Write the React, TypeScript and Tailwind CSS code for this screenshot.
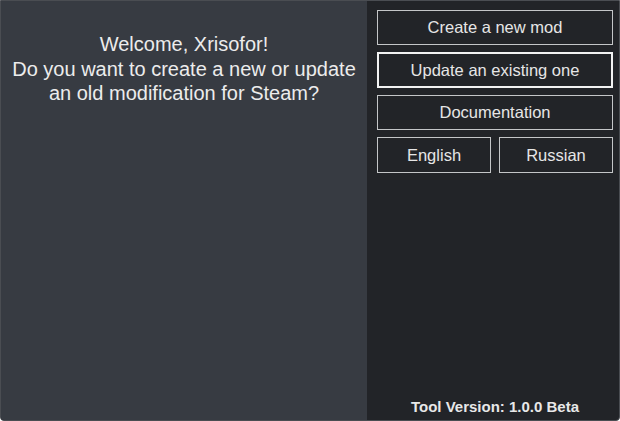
import React from 'react';

const btn =
  'flex h-[35px] items-center justify-center border border-[#c4c6c8] bg-[#222428] text-[16.5px] text-[#e6e6e6]';

export default function App() {
  return (
    <div
      className="flex h-[421px] w-[620px] overflow-hidden rounded-b-[4px] border border-[#4a4d52] bg-[#222428]"
      style={{ fontFamily: '"Liberation Sans", Arial, sans-serif' }}
    >
      {/* Welcome pane */}
      <div className="w-[366px] shrink-0 bg-[#373b42] pt-[31px] text-center text-[20px] leading-[24.5px] text-[#ececec]">
        <p>Welcome, Xrisofor!</p>
        <p>Do you want to create a new or update</p>
        <p>an old modification for Steam?</p>
      </div>

      {/* Actions */}
      <div className="flex flex-1 flex-col pl-[10px] pr-[6px] pt-[9px] pb-[2px]">
        <div className="flex flex-col gap-[7px]">
          <button type="button" className={btn}>Create a new mod</button>
          <button
            type="button"
            className="flex h-[36px] items-center justify-center border-2 border-[#f2f2f2] bg-[#222428] text-[16.5px] text-[#e6e6e6]"
          >
            Update an existing one
          </button>
          <button type="button" className={btn}>Documentation</button>
          <div className="flex gap-[8px]">
            <button type="button" className={`${btn} h-[36px] flex-1`}>English</button>
            <button type="button" className={`${btn} h-[36px] flex-1`}>Russian</button>
          </div>
        </div>
        <div className="mt-auto text-center text-[15px] font-bold text-[#e8e8e8]">
          Tool Version: 1.0.0 Beta
        </div>
      </div>
    </div>
  );
}
